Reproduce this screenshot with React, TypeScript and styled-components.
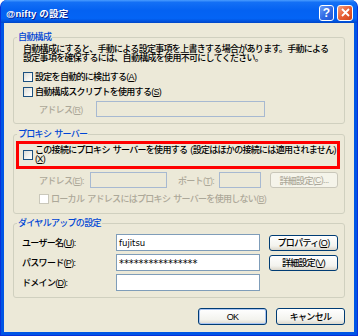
import React from 'react';
import styled, { createGlobalStyle, css } from 'styled-components';

const font = `"Liberation Sans", "Noto Sans CJK JP", sans-serif`;

const GlobalStyle = createGlobalStyle`
  html, body {
    margin: 0;
    padding: 0;
    background: #ffffff;
  }
  body {
    font-family: ${font};
  }
`;

const Window = styled.div`
  width: 358px;
  height: 336px;
  box-sizing: border-box;
  display: flex;
  flex-direction: column;
  background: #0055e5;
  border: 1px solid #0831d9;
  border-top: none;
  border-radius: 7px 7px 0 0;
  overflow: hidden;
  font-family: ${font};
  font-size: 9px;
  font-weight: 500;
  letter-spacing: -0.7px;
  color: #000;
`;

const TitleBar = styled.div`
  height: 23px;
  flex: none;
  display: flex;
  align-items: center;
  justify-content: space-between;
  padding: 0 4px 0 5px;
  background: linear-gradient(
    180deg,
    #4a9dff 0%,
    #1470f5 10%,
    #0462f2 45%,
    #0464f5 80%,
    #0053de 92%,
    #0046c6 100%
  );
`;

const Title = styled.div`
  color: #fff;
  font-weight: bold;
  font-size: 9.5px;
  letter-spacing: 0.2px;
  text-shadow: 1px 1px 0 #0a1e8c;
  margin-top: 2px;
`;

const TitleButtons = styled.div`
  display: flex;
  gap: 3px;
  margin-top: 2px;
`;

const CaptionButton = styled.div<{ $close?: boolean }>`
  width: 15px;
  height: 16px;
  box-sizing: border-box;
  border: 1px solid #fff;
  border-radius: 3px;
  display: flex;
  align-items: center;
  justify-content: center;
  color: #fff;
  font-weight: bold;
  font-size: 12px;
  letter-spacing: 0;
  font-family: "Liberation Sans", sans-serif;
  background: linear-gradient(135deg, #6a9cf8 0%, #2f69e4 55%, #2056d4 100%);
  ${(p) =>
    p.$close &&
    css`
      width: 16px;
      background: linear-gradient(135deg, #f4a080 0%, #e85f35 50%, #d0431a 100%);
    `}
`;

const Body = styled.div`
  flex: 1;
  margin: 0 3px 3px 3px;
  background: #ece9d8;
  padding: 9px 9px 0 9px;
  display: flex;
  flex-direction: column;
`;

const Group = styled.fieldset<{ $mt?: number; $pb: number }>`
  margin: ${(p) => p.$mt ?? 0}px 0 0 0;
  padding: 0 0 ${(p) => p.$pb}px 0;
  border: 1px solid #d0d0bf;
  border-radius: 3px;
  min-width: 0;
  display: flex;
  flex-direction: column;
`;

const Legend = styled.legend`
  margin-left: 3px;
  padding: 0 1px;
  color: #0046d5;
  line-height: 11px;
`;

const Desc = styled.div`
  margin: 2px 0 0 9px;
  line-height: 9px;
  white-space: nowrap;

  span {
    display: block;
  }
`;

/* word gap between Japanese phrases */
const Sp = styled.span`
  display: inline-block;
  width: 3px;
`;

const Row = styled.div<{ $mt?: number; $ml?: number; $h?: number }>`
  display: flex;
  align-items: center;
  height: ${(p) => p.$h ?? 13}px;
  margin-top: ${(p) => p.$mt ?? 0}px;
  margin-left: ${(p) => p.$ml ?? 0}px;
  white-space: nowrap;
`;

const Check = styled.span<{ $disabled?: boolean }>`
  width: 10px;
  height: 10px;
  flex: none;
  box-sizing: border-box;
  border: 1px solid ${(p) => (p.$disabled ? '#cac8bb' : '#1c5180')};
  background: ${(p) =>
    p.$disabled ? '#fff' : 'linear-gradient(135deg, #dcdcd7 0%, #f4f4f0 60%, #ffffff 100%)'};
  margin-right: 2px;
`;

const Label = styled.span<{ $w?: number; $disabled?: boolean }>`
  display: inline-block;
  width: ${(p) => (p.$w ? `${p.$w}px` : 'auto')};
  flex: none;
  color: ${(p) => (p.$disabled ? '#aca899' : '#000')};
`;

const Input = styled.div<{ $w: number; $h?: number; $disabled?: boolean }>`
  width: ${(p) => p.$w}px;
  height: ${(p) => p.$h ?? 16}px;
  box-sizing: border-box;
  flex: none;
  border: 1px solid ${(p) => (p.$disabled ? '#a7b9d1' : '#7f9db9')};
  background: ${(p) => (p.$disabled ? '#ece9d8' : '#fff')};
  display: flex;
  align-items: center;
  padding-left: 2px;
  font-family: "DejaVu Sans", sans-serif;
  font-weight: normal;
  font-size: 8.5px;
  letter-spacing: 0;
`;

const Secret = styled.span`
  font-size: 10px;
  letter-spacing: -0.1px;
  padding-top: 2px;
`;

const Button = styled.div<{ $w?: number; $h?: number; $disabled?: boolean; $default?: boolean }>`
  width: ${(p) => p.$w ?? 69}px;
  height: ${(p) => p.$h ?? 16}px;
  box-sizing: border-box;
  flex: none;
  display: flex;
  align-items: center;
  justify-content: center;
  border: 1px solid #003c74;
  border-radius: 3px;
  background: linear-gradient(180deg, #ffffff 0%, #f3f3ee 70%, #dcd8cc 100%);
  ${(p) =>
    p.$default &&
    css`
      box-shadow: inset 0 0 0 1px #a9c4f2;
    `}
  ${(p) =>
    p.$disabled &&
    css`
      border-color: #c9c7ba;
      background: #f5f4ea;
      color: #aca899;
    `}
`;

const RedBox = styled.div`
  margin: 1px 4px 0 2px;
  border: 3px solid #ff0000;
  padding: 2px 0 2px 4px;
  display: flex;
  align-items: center;

  div {
    line-height: 9px;
    white-space: nowrap;
  }
  div > span {
    display: block;
  }
`;

const Footer = styled.div`
  display: flex;
  justify-content: flex-end;
  gap: 9px;
  margin-top: 10px;
`;

const App: React.FC = () => (
  <>
    <GlobalStyle />
    <Window>
      <TitleBar>
        <Title>@nifty の設定</Title>
        <TitleButtons>
          <CaptionButton>?</CaptionButton>
          <CaptionButton $close>
            <svg width="9" height="9" viewBox="0 0 9 9">
              <path d="M1 1 L8 8 M8 1 L1 8" stroke="#fff" strokeWidth="1.8" />
            </svg>
          </CaptionButton>
        </TitleButtons>
      </TitleBar>
      <Body>
        <Group $pb={6}>
          <Legend>自動構成</Legend>
          <Desc>
            <span>自動構成にすると、手動による設定事項を上書きする場合があります。手動による</span>
            <span>設定事項を確保するには、自動構成を使用不可にしてください。</span>
          </Desc>
          <Row $mt={7} $ml={9}>
            <Check />
            <Label>
              設定を自動的に検出する(<u>A</u>)
            </Label>
          </Row>
          <Row $mt={2} $ml={9}>
            <Check />
            <Label>
              自動構成スクリプトを使用する(<u>S</u>)
            </Label>
          </Row>
          <Row $mt={3} $ml={25} $h={16}>
            <Label $w={57} $disabled>
              アドレス(<u>R</u>)
            </Label>
            <Input $w={169} $disabled />
          </Row>
        </Group>

        <Group $mt={5} $pb={8}>
          <Legend>
            プロキシ<Sp> </Sp>サーバー
          </Legend>
          <RedBox>
            <Check />
            <div>
              <span>
                この接続にプロキシ<Sp> </Sp>サーバーを使用する<Sp> </Sp>(設定はほかの接続には適用されません)
              </span>
              <span>
                (<u>X</u>)
              </span>
            </div>
          </RedBox>
          <Row $mt={3} $ml={25} $h={16}>
            <Label $w={51} $disabled>
              アドレス(<u>E</u>):
            </Label>
            <Input $w={77} $disabled />
            <Label $w={41} $disabled style={{ marginLeft: 11 }}>
              ポート(<u>T</u>):
            </Label>
            <Input $w={42} $disabled />
            <Button $w={68} $disabled style={{ marginLeft: 9 }}>
              詳細設定(<u>C</u>)...
            </Button>
          </Row>
          <Row $mt={4} $ml={25}>
            <Check $disabled />
            <Label $disabled>
              ローカル<Sp> </Sp>アドレスにはプロキシ<Sp> </Sp>サーバーを使用しない(<u>B</u>)
            </Label>
          </Row>
        </Group>

        <Group $mt={4} $pb={6}>
          <Legend>ダイヤルアップの設定</Legend>
          <Row $mt={5} $ml={8} $h={17}>
            <Label $w={94}>
              ユーザー名(<u>U</u>):
            </Label>
            <Input $w={144} $h={17}>fujitsu</Input>
            <Button style={{ marginLeft: 9 }}>
              プロパティ(<u>O</u>)
            </Button>
          </Row>
          <Row $mt={3} $ml={8} $h={17}>
            <Label $w={94}>
              パスワード(<u>P</u>):
            </Label>
            <Input $w={144} $h={17}>
              <Secret>****************</Secret>
            </Input>
            <Button style={{ marginLeft: 9 }}>
              詳細設定(<u>V</u>)
            </Button>
          </Row>
          <Row $mt={3} $ml={8} $h={17}>
            <Label $w={94}>
              ドメイン(<u>D</u>):
            </Label>
            <Input $w={144} $h={17} />
          </Row>
        </Group>

        <Footer>
          <Button $h={17} $default>
            OK
          </Button>
          <Button $h={17}>キャンセル</Button>
        </Footer>
      </Body>
    </Window>
  </>
);

export default App;
